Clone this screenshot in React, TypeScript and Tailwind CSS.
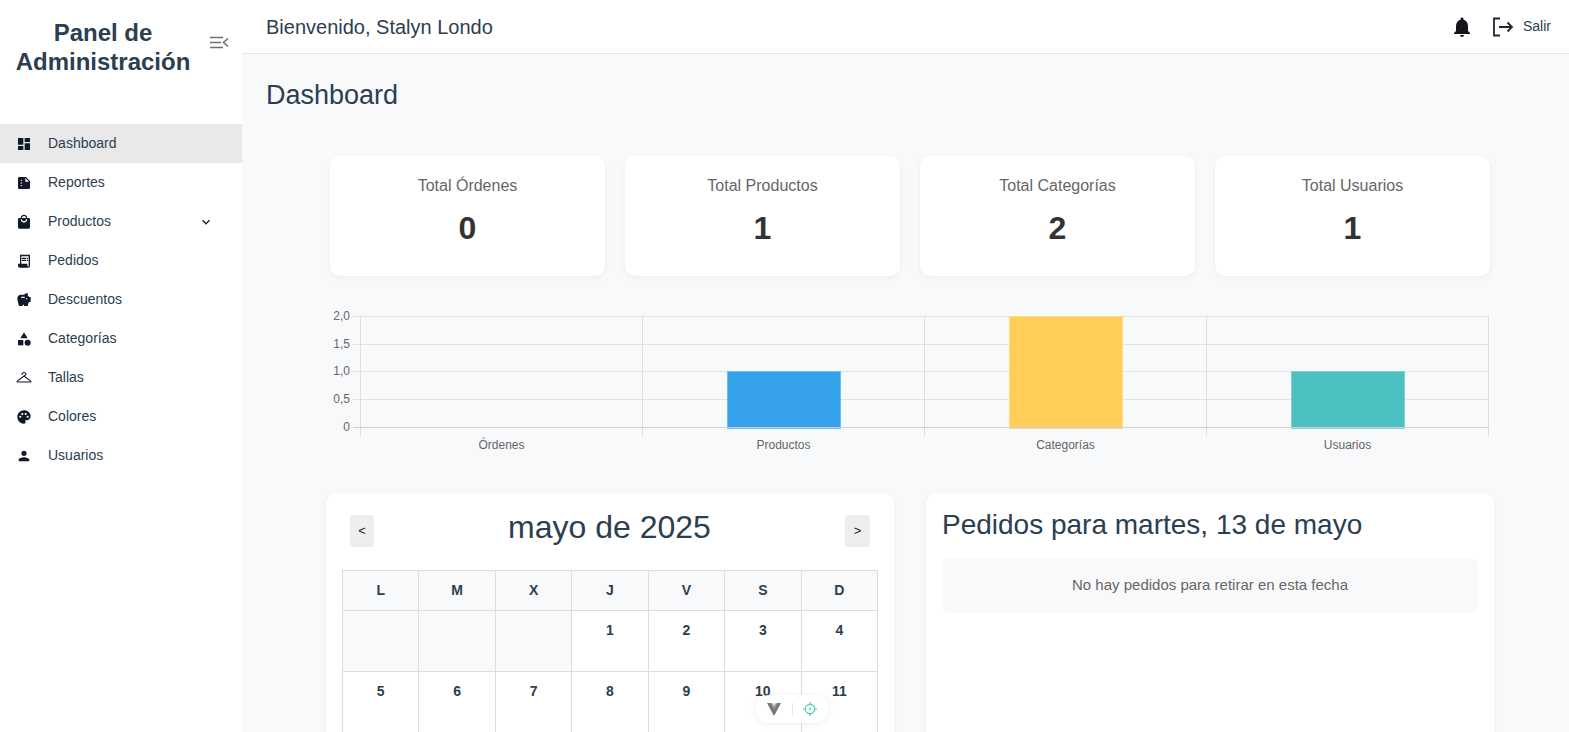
import React from "react";
import { MdDashboard, MdSummarize, MdLocalMall, MdReceiptLong, MdSavings, MdCategory, MdPalette, MdPerson, MdNotifications, MdKeyboardArrowDown } from "react-icons/md";
import { PiCoatHanger } from "react-icons/pi";

const menu: { label: string; Icon: React.ComponentType<{ className?: string }>; active?: boolean; arrow?: boolean }[] = [
  { label: "Dashboard", Icon: MdDashboard, active: true },
  { label: "Reportes", Icon: MdSummarize },
  { label: "Productos", Icon: MdLocalMall, arrow: true },
  { label: "Pedidos", Icon: MdReceiptLong },
  { label: "Descuentos", Icon: MdSavings },
  { label: "Categorías", Icon: MdCategory },
  { label: "Tallas", Icon: PiCoatHanger },
  { label: "Colores", Icon: MdPalette },
  { label: "Usuarios", Icon: MdPerson },
];

const stats = [
  ["Total Órdenes", "0"],
  ["Total Productos", "1"],
  ["Total Categorías", "2"],
  ["Total Usuarios", "1"],
];

const week = ["L", "M", "X", "J", "V", "S", "D"];
const days: (number | null)[] = [null, null, null, 1, 2, 3, 4, 5, 6, 7, 8, 9, 10, 11];

function Chart() {
  const ys = [316.5, 344.5, 371.5, 399.5];
  const xs = [360.5, 642.5, 924.5, 1206.5, 1488.5];
  const ox = 330;
  const oy = 300;
  const bars = [
    { x: 727, y: 371, h: 57, fill: "#36a2eb", stroke: "#6fbdf0", label: "Productos" },
    { x: 1009, y: 316, h: 112, fill: "#ffce56", stroke: "#ffdc85", label: "Categorías" },
    { x: 1291, y: 371, h: 57, fill: "#4bc0c0", stroke: "#7fd3d3", label: "Usuarios" },
  ];
  return (
    <svg width="1160" height="160" viewBox={`${ox} ${oy} 1160 160`} className="block" style={{ fontFamily: '"Liberation Sans", Arial, sans-serif' }}>
      {ys.map((y) => (
        <line key={y} x1={353} x2={1489} y1={y} y2={y} stroke="#e2e3e5" />
      ))}
      {xs.map((x) => (
        <line key={x} x1={x} x2={x} y1={316} y2={436} stroke="#dddee0" />
      ))}
      {bars.map((b) => (
        <rect key={b.label} x={b.x + 0.5} y={b.y + 0.5} width={113} height={b.h} fill={b.fill} stroke={b.stroke} />
      ))}
      <line x1={353} x2={1489} y1={427.5} y2={427.5} stroke="#cfd0d2" />
      {[["2,0", 320], ["1,5", 348], ["1,0", 375], ["0,5", 403], ["0", 431]].map(([t, y]) => (
        <text key={t} x={350} y={y} textAnchor="end" fontSize="12" fill="#666">{t}</text>
      ))}
      {[["Órdenes", 501.5], ["Productos", 783.5], ["Categorías", 1065.5], ["Usuarios", 1347.5]].map(([t, x]) => (
        <text key={t} x={x} y={449} textAnchor="middle" fontSize="12" fill="#666">{t}</text>
      ))}
    </svg>
  );
}

export default function App() {
  return (
    <div className="relative flex h-[732px] w-full overflow-hidden bg-[#f8f9fa] text-[#2c3e50]" style={{ fontFamily: '"Liberation Sans", Arial, sans-serif' }}>
      <aside className="flex w-[242px] shrink-0 flex-col bg-white">
        <div className="flex h-[124px] items-start pt-[18px]">
          <h1 className="ml-[14px] w-[178px] text-center text-[24px] leading-[29px] font-bold text-[#2c3e50]">Panel de Administración</h1>
          <svg className="mt-[17px] ml-[17px]" width="20" height="16" viewBox="0 0 20 16" fill="none" stroke="#6b6f76" strokeWidth="1.6">
            <path d="M1 2.5h13M1 7.5h11M1 12.5h13M19 3.5l-4.5 4 4.5 4" />
          </svg>
        </div>
        <nav className="flex flex-col">
          {menu.map(({ label, Icon, active, arrow }) => (
            <div key={label} className={`flex h-[39px] items-center ${active ? "bg-[#e9e9e9]" : ""}`}>
              <Icon className="ml-[16px] h-[16px] w-[16px] text-[#111827]" />
              <span className="ml-[16px] text-[14px] text-[#2c3e50]">{label}</span>
              {arrow && <MdKeyboardArrowDown className="mr-[28px] ml-auto h-[16px] w-[16px] text-[#222]" />}
            </div>
          ))}
        </nav>
      </aside>

      <div className="flex min-w-0 flex-1 flex-col">
        <header className="flex h-[54px] shrink-0 items-center justify-between border-b border-[#e3e5e8] bg-white pr-[18px] pl-[24px]">
          <span className="text-[20px] text-[#2c3e50]">Bienvenido, Stalyn Londo</span>
          <div className="flex items-center">
            <MdNotifications className="h-[24px] w-[24px] text-[#14141c]" />
            <svg className="ml-[18px]" width="22" height="20" viewBox="0 0 22 20" fill="none" stroke="#1f2430" strokeWidth="1.8">
              <path d="M8 1.5H2v17h6M7 10h13M15.5 5.5 20 10l-4.5 4.5" />
            </svg>
            <span className="ml-[9px] text-[14px] text-[#2c3e50]">Salir</span>
          </div>
        </header>

        <main className="pl-[24px]">
          <h2 className="mt-[24px] text-[27px] leading-[34px] font-normal text-[#2c3e50]">Dashboard</h2>
          <div className="ml-[60px] w-[1168px]">
            <div className="mt-[44px] grid grid-cols-4 gap-[20px] px-[4px]">
              {stats.map(([t, v]) => (
                <div key={t} className="flex h-[120px] flex-col items-center rounded-[10px] bg-white pt-[20px] shadow-[0_2px_6px_rgba(0,0,0,0.05)]">
                  <span className="text-[16px] leading-[19px] text-[#666]">{t}</span>
                  <span className="mt-[15px] text-[32px] leading-[37px] font-bold text-[#333]">{v}</span>
                </div>
              ))}
            </div>
            <div className="mt-[24px] px-[4px]">
              <Chart />
            </div>
            <div className="mt-[33px] grid grid-cols-2 gap-[32px]">
              <section className="h-[300px] rounded-[10px] bg-white px-[16px] pt-[16px] shadow-[0_2px_6px_rgba(0,0,0,0.05)]">
                <div className="flex h-[61px] items-start justify-between px-[8px]">
                  <button className="mt-[6px] h-[32px] w-[24px] rounded-[3px] bg-[#eeeeee] text-[13px] text-[#222]">&lt;</button>
                  <span className="text-[32px] leading-[37px] text-[#2c3e50]">mayo de 2025</span>
                  <button className="mt-[6px] h-[32px] w-[25px] rounded-[3px] bg-[#eeeeee] text-[13px] text-[#222]">&gt;</button>
                </div>
                <div className="grid grid-cols-7 border-t border-l border-[#dddddd]">
                  {week.map((d) => (
                    <div key={d} className="flex h-[40px] items-center justify-center border-r border-b border-[#dddddd] bg-[#f8f9fa] text-[14px] font-bold text-[#2c3e50]">{d}</div>
                  ))}
                  {days.map((d, i) => (
                    <div key={i} className={`h-[61px] border-r border-b border-[#dddddd] pt-[11px] text-center text-[14px] leading-[16px] font-bold text-[#2c3e50] ${d === null ? "bg-[#f8f9fa]" : ""}`}>{d}</div>
                  ))}
                </div>
              </section>
              <section className="h-[300px] rounded-[10px] bg-white px-[16px] pt-[16px] shadow-[0_2px_6px_rgba(0,0,0,0.05)]">
                <h3 className="text-[28px] leading-[32px] font-normal text-[#2c3e50]">Pedidos para martes, 13 de mayo</h3>
                <div className="mt-[17px] flex h-[55px] items-center justify-center rounded-[8px] bg-[#f8f9fa] text-[15px] text-[#666]">No hay pedidos para retirar en esta fecha</div>
              </section>
            </div>
          </div>
        </main>
      </div>

      <div className="absolute top-[695px] left-[755px] flex h-[28px] w-[74px] items-center justify-between rounded-full bg-white px-[12px] shadow-[0_1px_6px_rgba(0,0,0,0.08)]">
        <svg width="14" height="13" viewBox="0 0 14 13"><path d="M0 0h4.5L7 4.2 9.5 0H14L7 13z" fill="#777" /><path d="M3.5 0h2L7 2.6 8.5 0h2L7 6z" fill="#aaa" /></svg>
        <span className="h-[12px] w-px bg-[#e5e5e5]" />
        <svg width="14" height="14" viewBox="0 0 14 14" fill="none" stroke="#42d3a5" strokeWidth="1.2"><circle cx="7" cy="7" r="4.7" /><circle cx="7" cy="7" r="1" fill="#42d3a5" stroke="none" /><path d="M7 0v2.3M7 11.7V14M0 7h2.3M11.7 7H14" /></svg>
      </div>
    </div>
  );
}
